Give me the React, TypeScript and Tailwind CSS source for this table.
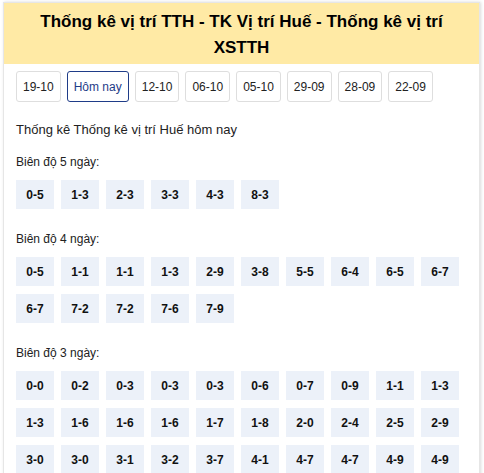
import React from "react";

const dates = ["19-10", "Hôm nay", "12-10", "06-10", "05-10", "29-09", "28-09", "22-09"];
const groups: { label: string; items: string[] }[] = [
  { label: "Biên độ 5 ngày:", items: ["0-5", "1-3", "2-3", "3-3", "4-3", "8-3"] },
  {
    label: "Biên độ 4 ngày:",
    items: ["0-5", "1-1", "1-1", "1-3", "2-9", "3-8", "5-5", "6-4", "6-5", "6-7", "6-7", "7-2", "7-2", "7-6", "7-9"],
  },
  {
    label: "Biên độ 3 ngày:",
    items: [
      "0-0", "0-2", "0-3", "0-3", "0-3", "0-6", "0-7", "0-9", "1-1", "1-3",
      "1-3", "1-6", "1-6", "1-6", "1-7", "1-8", "2-0", "2-4", "2-5", "2-9",
      "3-0", "3-0", "3-1", "3-2", "3-7", "4-1", "4-7", "4-7", "4-9", "4-9",
    ],
  },
];

export default function App() {
  return (
    <div className="bg-white pl-[3px] pt-[2px] h-[473px] overflow-hidden" style={{ fontFamily: '"Liberation Sans", Arial, sans-serif' }}>
      <div className="w-[477px] border border-[#e6e6e6] shadow-[1px_0_3px_rgba(0,0,0,0.15)] bg-white">
        <div className="bg-[#ffeaa5] px-4 pt-[6px] pb-[3px] text-center text-[17px] font-bold leading-[26px] text-black">
          Thống kê vị trí TTH - TK Vị trí Huế - Thống kê vị trí XSTTH
        </div>
        <div className="flex gap-[6px] pl-[12px] pt-[7px]">
          {dates.map((d) => (
            <div
              key={d}
              className={
                d === "Hôm nay"
                  ? "h-[31px] px-[6px] flex items-center rounded-[3px] border border-[#1f3c88] text-[12px] text-[#1f3c88]"
                  : "h-[31px] px-[6px] flex items-center rounded-[3px] border border-[#dedede] text-[12px] text-[#222]"
              }
            >
              {d}
            </div>
          ))}
        </div>
        <div className="pl-[12px] pt-[19px] text-[13px] text-[#222] leading-[18px]">
          Thống kê Thống kê vị trí Huế hôm nay
        </div>
        {groups.map((g, gi) => (
          <div key={g.label} className="pl-[12px] pr-[12px]">
            <div className={(gi === 0 ? "pt-[15px] " : "pt-[10px] ") + "pb-[9px] text-[12px] text-[#222] leading-[17px]"}>
              {g.label}
            </div>
            <div className="flex flex-wrap gap-x-[7px] gap-y-[8px] pb-[12px]">
              {g.items.map((it, i) => (
                <div
                  key={i}
                  className="w-[38px] h-[29px] flex items-center justify-center bg-[#ecf1f9] text-[12px] font-bold text-[#111]"
                >
                  {it}
                </div>
              ))}
            </div>
          </div>
        ))}
      </div>
    </div>
  );
}
